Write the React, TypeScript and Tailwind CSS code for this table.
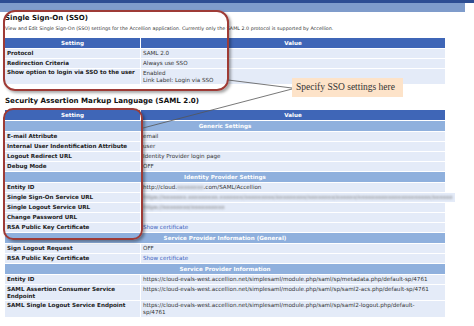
import React from 'react';

const cell = 'bg-[#e4ebf8] px-[2px]';

function Row({ label, value, h = 'h-[9px]', lh = 'leading-[9px]' }: { label: React.ReactNode; value: React.ReactNode; h?: string; lh?: string }) {
  return (
    <div className={`flex gap-px mt-px ${h}`}>
      <div className={`w-[135px] shrink-0 font-bold text-[#222] ${cell} ${lh}`}>{label}</div>
      <div className={`flex-1 text-[#333] ${cell} ${lh}`}>{value}</div>
    </div>
  );
}

function Head() {
  return (
    <div className="flex gap-px h-[10px] leading-[10px] font-bold text-white">
      <div className="w-[135px] shrink-0 bg-[#3f66b7] text-center">Setting</div>
      <div className="flex-1 bg-[#3f66b7] text-center">Value</div>
    </div>
  );
}

function Sub({ children }: { children: string }) {
  return (
    <div className="mt-px h-[10px] leading-[10px] bg-[#8fb0dd] text-center font-bold text-white">{children}</div>
  );
}

const Blur = ({ children }: { children: string }) => <span className="blur-[1.2px] text-[#777]">{children}</span>;
const Link = ({ children }: { children: string }) => <span className="text-[#3b5fc0]">{children}</span>;

export default function App() {
  return (
    <div className="relative w-[474px] h-[326px] overflow-hidden bg-white font-['DejaVu_Sans',sans-serif]">
      <div className="h-[3px] bg-[#2d4d92]" />
      <div className="h-[9px] w-[465px] bg-[#7f9ccb]" />

      <div className="px-[5px] w-[450px]">
        <h1 className="mt-[1px] text-[7px] leading-[10px] font-bold text-[#111]">Single Sign-On (SSO)</h1>
        <p className="mt-[2px] text-[4.8px] leading-[8px] text-[#333] whitespace-nowrap">
          View and Edit Single Sign-On (SSO) settings for the Accellion application. Currently only the SAML 2.0 protocol is supported by Accellion.
        </p>

        <div className="mt-[5px] text-[5.6px]">
          <Head />
          <Row label="Protocol" value="SAML 2.0" />
          <Row label="Redirection Criteria" value="Always use SSO" />
          <Row
            label="Show option to login via SSO to the user"
            value={<div className="pt-[1px]">Enabled<br />Link Label: Login via SSO</div>}
            h="h-[15px]"
            lh="leading-[6.5px]"
          />
        </div>

        <h2 className="mt-[12px] text-[7.1px] leading-[10px] font-bold text-[#111]">Security Assertion Markup Language (SAML 2.0)</h2>

        <div className="mt-[4px] text-[5.6px]">
          <Head />
          <Sub>Generic Settings</Sub>
          <Row label="E-mail Attribute" value="email" />
          <Row label="Internal User Indentification Attribute" value="user" />
          <Row label="Logout Redirect URL" value="Identity Provider login page" />
          <Row label="Debug Mode" value="OFF" />
          <Sub>Identity Provider Settings</Sub>
          <Row label="Entity ID" value={<>http://cloud.<Blur>xxxxxxxx</Blur>.com/SAML/Accellion</>} />
          <Row label="Single Sign-On Service URL" value={<Blur>https://xxxxxxx.xxxxxxxxx.xxxxxxx/xxxxxxxxx/xxxxxxxxx/xxxxxxxx/xxxxxx/xxxxxxxxxxxxxxxxxxxxxx/xxxxxx</Blur>} />
          <Row label="Single Logout Service URL" value={<Blur>https://xxxxxxxx/xxxxxxxxxx</Blur>} />
          <Row label="Change Password URL" value="" />
          <Row label="RSA Public Key Certificate" value={<Link>Show certificate</Link>} />
          <Sub>Service Provider Information (General)</Sub>
          <Row label="Sign Logout Request" value="OFF" />
          <Row label="RSA Public Key Certificate" value={<Link>Show certificate</Link>} />
          <Sub>Service Provider Information</Sub>
          <Row label="Entity ID" value="https://cloud-evals-west.accellion.net/simplesaml/module.php/saml/sp/metadata.php/default-sp/4761" />
          <Row
            label={<div className="pt-[1px]">SAML Assertion Consumer Service<br />Endpoint</div>}
            value={<div className="pt-[1px]">https://cloud-evals-west.accellion.net/simplesaml/module.php/saml/sp/saml2-acs.php/default-sp/4761</div>}
            h="h-[15px]"
            lh="leading-[6.5px]"
          />
          <Row
            label={<div className="pt-[1px]">SAML Single Logout Service Endpoint</div>}
            value={<div className="pt-[1px]">https://cloud-evals-west.accellion.net/simplesaml/module.php/saml/sp/saml2-logout.php/default-<br />sp/4761</div>}
            h="h-[16px]"
            lh="leading-[6.5px]"
          />
        </div>
      </div>

      {/* annotation overlays */}
      <div className="absolute left-[3px] top-[10px] w-[226px] h-[81px] rounded-[12px] border-2 border-[#9e3b36] shadow-[2px_2px_3px_rgba(0,0,0,0.35)]" />
      <div className="absolute left-[3px] top-[108px] w-[140px] h-[132px] rounded-[10px] border-2 border-[#9e3b36] shadow-[2px_2px_3px_rgba(0,0,0,0.35)]" />
      <svg className="absolute inset-0 pointer-events-none" width="474" height="326">
        <line x1="228" y1="80" x2="292" y2="88" stroke="#555" strokeWidth="0.8" />
        <line x1="292" y1="89" x2="143" y2="128" stroke="#555" strokeWidth="0.8" />
      </svg>
      <div className="absolute left-[292px] top-[78px] w-[111px] h-[19px] bg-[#fde3c9] pl-[4px] font-['Liberation_Serif',serif] text-[9.5px] leading-[19px] text-[#333]">
        Specify SSO settings here
      </div>
    </div>
  );
}
